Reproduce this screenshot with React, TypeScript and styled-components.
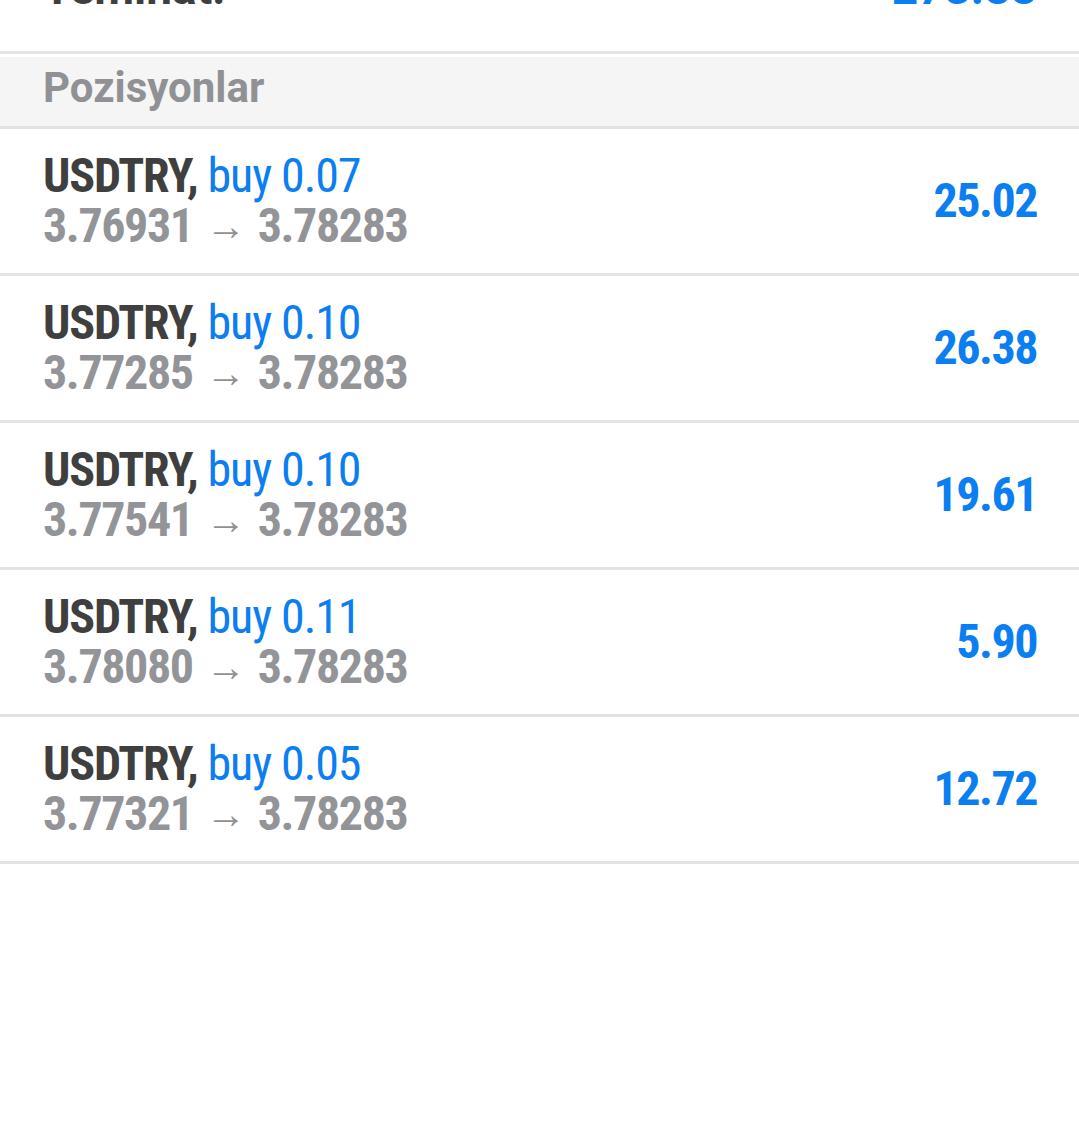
import React from "react";
import styled, { createGlobalStyle } from "styled-components";

const GlobalStyle = createGlobalStyle`
  html, body {
    margin: 0;
    padding: 0;
    background: #ffffff;
  }
  body {
    font-family: "Roboto Condensed", "Liberation Sans Narrow", "Arial Narrow", Roboto, sans-serif;
    overflow: hidden;
  }
`;

interface Position {
  symbol: string;
  side: string;
  volume: string;
  open: string;
  current: string;
  profit: string;
}

const POSITIONS: Position[] = [
  { symbol: "USDTRY", side: "buy", volume: "0.07", open: "3.76931", current: "3.78283", profit: "25.02" },
  { symbol: "USDTRY", side: "buy", volume: "0.10", open: "3.77285", current: "3.78283", profit: "26.38" },
  { symbol: "USDTRY", side: "buy", volume: "0.10", open: "3.77541", current: "3.78283", profit: "19.61" },
  { symbol: "USDTRY", side: "buy", volume: "0.11", open: "3.78080", current: "3.78283", profit: "5.90" },
  { symbol: "USDTRY", side: "buy", volume: "0.05", open: "3.77321", current: "3.78283", profit: "12.72" },
];

const App = () => (
  <>
    <GlobalStyle />
    <Page>
      <SummaryRow>
        <SummaryLabel>Teminat:</SummaryLabel>
        <SummaryValue>273.88</SummaryValue>
      </SummaryRow>
      <SectionHeader>Pozisyonlar</SectionHeader>
      {POSITIONS.map((p, i) => (
        <PositionRow key={i}>
          <Info>
            <TitleLine>
              <Symbol>{p.symbol},</Symbol> <Deal>{p.side} {p.volume}</Deal>
            </TitleLine>
            <PriceLine>
              {p.open}
              <Arrow>→</Arrow>
              {p.current}
            </PriceLine>
          </Info>
          <Profit>{p.profit}</Profit>
        </PositionRow>
      ))}
    </Page>
  </>
);

export default App;

const Page = styled.div`
  width: 1079px;
  height: 1146px;
  background: #ffffff;
  display: flex;
  flex-direction: column;
  overflow: hidden;
`;

const SummaryRow = styled.div`
  flex: none;
  display: flex;
  justify-content: space-between;
  align-items: flex-end;
  height: 51px;
  padding: 0 42px 0 43px;
  border-bottom: 3px solid #e4e4e4;
  font-family: Roboto, sans-serif;
  font-size: 46px;
  line-height: 50px;
  font-weight: 700;
  overflow: hidden;
`;

const SummaryLabel = styled.span`
  color: #3f3f3f;
  margin-bottom: 38px;
`;

const SummaryValue = styled.span`
  color: #0b7ef2;
  margin-bottom: 38px;
`;

const SectionHeader = styled.div`
  flex: none;
  margin-top: 3px;
  height: 63px;
  padding: 6px 43px 0;
  background: #f5f5f5;
  border-bottom: 3px solid #e2e2e2;
  font-family: Roboto, sans-serif;
  font-size: 42px;
  line-height: 50px;
  font-weight: 700;
  color: #8f9194;
`;

const PositionRow = styled.div`
  flex: none;
  display: flex;
  align-items: center;
  justify-content: space-between;
  height: 100px;
  padding: 22px 42px 22px 43px;
  border-bottom: 3px solid #e3e3e3;
`;

const Info = styled.div`
  display: flex;
  flex-direction: column;
  font-size: 48px;
  line-height: 50px;
  letter-spacing: -1.1px;
`;

const TitleLine = styled.div`
  height: 50px;
  white-space: nowrap;
`;

const Symbol = styled.span`
  font-weight: 700;
  color: #3f3f3f;
`;

const Deal = styled.span`
  font-weight: 400;
  color: #0b7ef2;
`;

const PriceLine = styled.div`
  height: 50px;
  display: flex;
  align-items: baseline;
  white-space: nowrap;
  font-weight: 700;
  letter-spacing: -1.4px;
  color: #929497;
`;

const Arrow = styled.span`
  display: inline-block;
  font-weight: 700;
  font-size: 40px;
  line-height: 1;
  letter-spacing: 0;
  margin: 0 12px 0 13px;
  position: relative;
  top: -2px;
  color: #8f9194;
`;

const Profit = styled.div`
  font-size: 48px;
  line-height: 50px;
  font-weight: 700;
  letter-spacing: -1.5px;
  color: #0b7ef2;
`;
